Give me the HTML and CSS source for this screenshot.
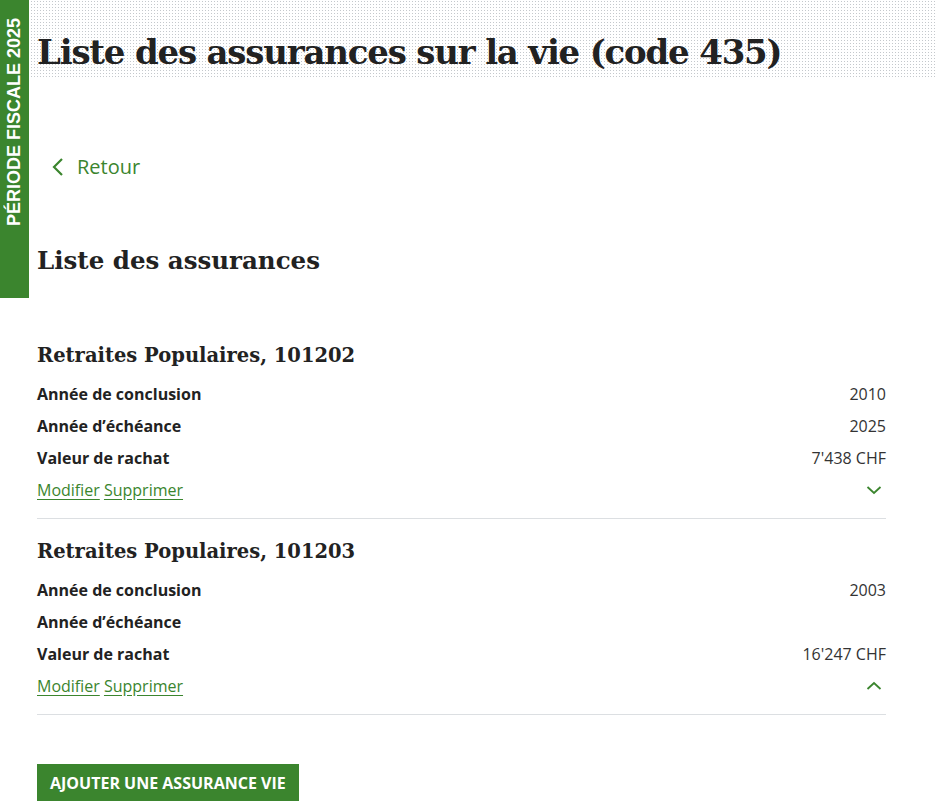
FILE: index.html
```html
<!DOCTYPE html>
<html lang="fr">
<head>
    <meta charset="UTF-8">
    <meta name="viewport" content="width=device-width, initial-scale=1.0">
    <title>Liste des assurances sur la vie (code 435)</title>
    <link rel="stylesheet" href="styles.css">
</head>
<body>
    <div class="period"><span>PÉRIODE FISCALE 2025</span></div>

    <header class="page-header">
        <h1>Liste des assurances sur la vie (code 435)</h1>
    </header>

    <main class="content">
        <a class="back" href="#">
            <svg width="12" height="20" viewBox="0 0 12 20"><path d="M10 2 L2 10 L10 18" fill="none" stroke="#3b852e" stroke-width="2.2"/></svg>
            Retour
        </a>

        <h2>Liste des assurances</h2>

        <section class="policy">
            <h3>Retraites Populaires, 101202</h3>
            <div class="row"><span class="label">Année de conclusion</span><span class="value">2010</span></div>
            <div class="row"><span class="label">Année d’échéance</span><span class="value">2025</span></div>
            <div class="row"><span class="label">Valeur de rachat</span><span class="value">7'438 CHF</span></div>
            <div class="row actions">
                <span><a href="#">Modifier</a> <a href="#">Supprimer</a></span>
                <svg class="toggle" width="16" height="10" viewBox="0 0 16 10"><path d="M1.5 2 L8 8 L14.5 2" fill="none" stroke="#3b852e" stroke-width="1.8"/></svg>
            </div>
        </section>

        <section class="policy">
            <h3>Retraites Populaires, 101203</h3>
            <div class="row"><span class="label">Année de conclusion</span><span class="value">2003</span></div>
            <div class="row"><span class="label">Année d’échéance</span><span class="value"></span></div>
            <div class="row"><span class="label">Valeur de rachat</span><span class="value">16'247 CHF</span></div>
            <div class="row actions">
                <span><a href="#">Modifier</a> <a href="#">Supprimer</a></span>
                <svg class="toggle" width="16" height="10" viewBox="0 0 16 10"><path d="M1.5 8 L8 2 L14.5 8" fill="none" stroke="#3b852e" stroke-width="1.8"/></svg>
            </div>
        </section>

        <button class="add">AJOUTER UNE ASSURANCE VIE</button>
    </main>
</body>
</html>
```

FILE: styles.css
```css
body { margin: 0; font-family: "Open Sans", sans-serif; color: #222; background: #fff; }

.period { position: absolute; top: 0; left: 0; width: 29px; height: 298px; box-sizing: border-box; padding-top: 18px; background: #3b852e; display: flex; justify-content: center; align-items: flex-start; }
.period span { writing-mode: vertical-rl; transform: rotate(180deg); color: #fff; font-family: "Liberation Sans", Arial, sans-serif; font-weight: bold; font-size: 18px; line-height: 29px; }

.page-header { height: 78px; box-sizing: border-box; padding: 28px 0 0 37px; background-color: #fff; background-image: radial-gradient(circle, #c4c8cc 0.7px, transparent 0.9px); background-size: 3px 3px; }
.page-header h1 { margin: 0; font-family: "DejaVu Serif", serif; font-weight: bold; font-size: 34px; line-height: 48px; color: #222; letter-spacing: -1.2px; }

.content { padding: 0 50px 0 37px; }

.back { display: inline-flex; align-items: center; gap: 13px; margin: 75px 0 0 15px; color: #3b852e; text-decoration: none; font-size: 20px; line-height: 28px; }

h2 { margin: 61px 0 0; font-family: "DejaVu Serif", serif; font-weight: bold; font-size: 24.5px; line-height: 36px; color: #222; }

.policy { border-bottom: 1px solid #dcdfe2; padding-bottom: 12px; }
.policy h3 { margin: 0 0 7px; padding-top: 62px; font-family: "DejaVu Serif", serif; font-weight: bold; font-size: 19.5px; line-height: 30px; color: #222; }
.policy + .policy h3 { padding-top: 18px; }

.row { display: flex; justify-content: space-between; align-items: center; line-height: 32px; font-size: 16px; }
.label { font-weight: bold; color: #222; }
.value { color: #333; }

.actions a { color: #3b852e; text-decoration: underline; text-underline-offset: 3px; }
.toggle { margin-right: 4px; }

.add { display: block; margin-top: 49px; padding: 0 13px; height: 37px; border: none; background: #3b852e; color: #fff; font-family: "Open Sans", sans-serif; font-weight: bold; font-size: 16px; cursor: pointer; }
```
